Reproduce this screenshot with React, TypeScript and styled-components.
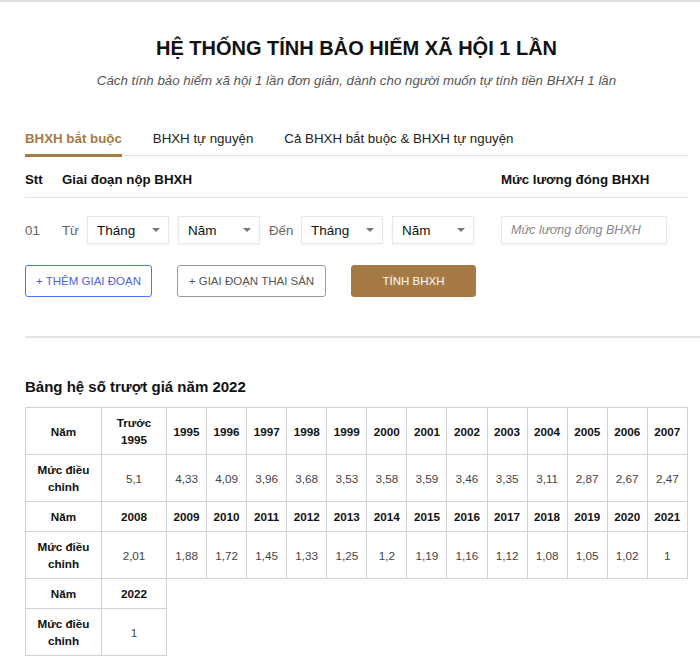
import { createGlobalStyle } from 'styled-components'
import styled from 'styled-components'

const GlobalStyle = createGlobalStyle`
  body {
    margin: 0;
    background: #fff;
    font-family: 'Liberation Sans', Arial, sans-serif;
    color: #222;
  }
`

const BROWN = '#a67a44'

const TopLine = styled.div`
  height: 2px;
  background: #e0e0e0;
`

const Page = styled.div`
  padding: 0 12px 0 25px;
`

const Title = styled.h1`
  margin: 34px 0 0;
  text-align: center;
  font-size: 20px;
  line-height: 24px;
  font-weight: 700;
  color: #111;
`

const Subtitle = styled.p`
  margin: 11px 0 0;
  text-align: center;
  font-size: 13.3px;
  line-height: 20px;
  font-style: italic;
  color: #555;
`

const TabBar = styled.div`
  margin-top: 38px;
  display: flex;
  gap: 31px;
  border-bottom: 1px solid #e3e3e3;
`

const Tab = styled.div<{ $active?: boolean }>`
  font-size: 13.3px;
  line-height: 20px;
  padding-bottom: 5px;
  margin-bottom: -2px;
  font-weight: ${({ $active }) => ($active ? 700 : 400)};
  color: ${({ $active }) => ($active ? BROWN : '#222')};
  border-bottom: 3px solid ${({ $active }) => ($active ? BROWN : 'transparent')};
`

const Grid = styled.div`
  display: grid;
  grid-template-columns: 37px 439px 1fr;
  align-items: center;
`

const HeadRow = styled(Grid)`
  padding: 14px 0 7px;
  border-bottom: 1px solid #e3e3e3;
  font-size: 13.3px;
  line-height: 20px;
  font-weight: 700;
  color: #111;
`

const DataRow = styled(Grid)`
  margin-top: 18px;
  font-size: 13.3px;
`

const Index = styled.span`
  color: #666;
`

const Period = styled.div`
  display: flex;
  align-items: center;
`

const Word = styled.span<{ $w: number }>`
  width: ${({ $w }) => $w}px;
  color: #666;
`

const SelectBox = styled.div<{ $gap?: number }>`
  width: 82px;
  height: 28px;
  box-sizing: border-box;
  margin-right: ${({ $gap }) => $gap ?? 0}px;
  border: 1px solid #e8e8e8;
  box-shadow: 0 1px 2px rgba(0, 0, 0, 0.05);
  display: flex;
  align-items: center;
  justify-content: space-between;
  padding: 0 8px 0 9px;
  font-size: 13.5px;
  color: #111;
`

const Caret = styled.span`
  width: 0;
  height: 0;
  border-left: 4px solid transparent;
  border-right: 4px solid transparent;
  border-top: 4px solid #777;
`

const Input = styled.div`
  width: 166px;
  height: 28px;
  box-sizing: border-box;
  border: 1px solid #e8e8e8;
  box-shadow: 0 1px 2px rgba(0, 0, 0, 0.05);
  display: flex;
  align-items: center;
  padding: 0 9px;
  font-size: 12.5px;
  font-style: italic;
  color: #888;
`

const Buttons = styled.div`
  margin-top: 21px;
  display: flex;
  gap: 25px;
`

const Button = styled.div<{ $kind: 'blue' | 'gray' | 'brown'; $w: number }>`
  width: ${({ $w }) => $w}px;
  height: 32px;
  box-sizing: border-box;
  border-radius: 3px;
  display: flex;
  align-items: center;
  justify-content: center;
  font-size: 11.5px;
  text-transform: uppercase;
  border: 1px solid
    ${({ $kind }) => ($kind === 'blue' ? '#4d73f0' : $kind === 'gray' ? '#9a9a9a' : BROWN)};
  color: ${({ $kind }) => ($kind === 'blue' ? '#4d62e0' : $kind === 'gray' ? '#555' : '#fff')};
  background: ${({ $kind }) => ($kind === 'brown' ? BROWN : '#fff')};
`

const Divider = styled.div`
  margin: 39px -12px 0 0;
  border-top: 2px solid #e3e3e3;
`

const TableTitle = styled.h2`
  margin: 39px 0 10px;
  font-size: 15px;
  line-height: 20px;
  font-weight: 700;
  color: #111;
`

const Table = styled.table`
  width: 663px;
  border-collapse: collapse;
  table-layout: fixed;
  font-size: 11.7px;
  line-height: 17px;
`

const Cell = styled.td<{ $bold?: boolean }>`
  border: 1px solid #d2d2d2;
  padding: 6px 2px;
  text-align: center;
  font-weight: ${({ $bold }) => ($bold ? 700 : 400)};
  color: ${({ $bold }) => ($bold ? '#111' : '#444')};
`

const years1 = ['1995', '1996', '1997', '1998', '1999', '2000', '2001', '2002', '2003', '2004', '2005', '2006', '2007']
const vals1 = ['4,33', '4,09', '3,96', '3,68', '3,53', '3,58', '3,59', '3,46', '3,35', '3,11', '2,87', '2,67', '2,47']
const years2 = ['2009', '2010', '2011', '2012', '2013', '2014', '2015', '2016', '2017', '2018', '2019', '2020', '2021']
const vals2 = ['1,88', '1,72', '1,45', '1,33', '1,25', '1,2', '1,19', '1,16', '1,12', '1,08', '1,05', '1,02', '1']

const Label = () => (
  <Cell $bold>
    Mức điều
    <br />
    chỉnh
  </Cell>
)

const Select = ({ label, gap }: { label: string; gap?: number }) => (
  <SelectBox $gap={gap}>
    {label}
    <Caret />
  </SelectBox>
)

export default function App() {
  return (
    <>
      <GlobalStyle />
      <TopLine />
      <Page>
        <Title>HỆ THỐNG TÍNH BẢO HIỂM XÃ HỘI 1 LẦN</Title>
        <Subtitle>Cách tính bảo hiểm xã hội 1 lần đơn giản, dành cho người muốn tự tính tiền BHXH 1 lần</Subtitle>

        <TabBar>
          <Tab $active>BHXH bắt buộc</Tab>
          <Tab>BHXH tự nguyện</Tab>
          <Tab>Cả BHXH bắt buộc &amp; BHXH tự nguyện</Tab>
        </TabBar>

        <HeadRow>
          <span>Stt</span>
          <span>Giai đoạn nộp BHXH</span>
          <span>Mức lương đóng BHXH</span>
        </HeadRow>

        <DataRow>
          <Index>01</Index>
          <Period>
            <Word $w={25}>Từ</Word>
            <Select label="Tháng" gap={9} />
            <Select label="Năm" gap={9} />
            <Word $w={32}>Đến</Word>
            <Select label="Tháng" gap={9} />
            <Select label="Năm" />
          </Period>
          <Input>Mức lương đóng BHXH</Input>
        </DataRow>

        <Buttons>
          <Button $kind="blue" $w={127}>+ Thêm giai đoạn</Button>
          <Button $kind="gray" $w={149}>+ Giai đoạn thai sản</Button>
          <Button $kind="brown" $w={125}>Tính BHXH</Button>
        </Buttons>

        <Divider />

        <TableTitle>Bảng hệ số trượt giá năm 2022</TableTitle>
        <Table>
          <colgroup>
            <col style={{ width: 76 }} />
            <col style={{ width: 65 }} />
          </colgroup>
          <tbody>
            <tr>
              <Cell $bold>Năm</Cell>
              <Cell $bold>
                Trước
                <br />
                1995
              </Cell>
              {years1.map(y => (
                <Cell key={y} $bold>{y}</Cell>
              ))}
            </tr>
            <tr>
              <Label />
              <Cell>5,1</Cell>
              {vals1.map((v, i) => (
                <Cell key={i}>{v}</Cell>
              ))}
            </tr>
            <tr>
              <Cell $bold>Năm</Cell>
              <Cell $bold>2008</Cell>
              {years2.map(y => (
                <Cell key={y} $bold>{y}</Cell>
              ))}
            </tr>
            <tr>
              <Label />
              <Cell>2,01</Cell>
              {vals2.map((v, i) => (
                <Cell key={i}>{v}</Cell>
              ))}
            </tr>
            <tr>
              <Cell $bold>Năm</Cell>
              <Cell $bold>2022</Cell>
            </tr>
            <tr>
              <Label />
              <Cell>1</Cell>
            </tr>
          </tbody>
        </Table>
      </Page>
    </>
  )
}
